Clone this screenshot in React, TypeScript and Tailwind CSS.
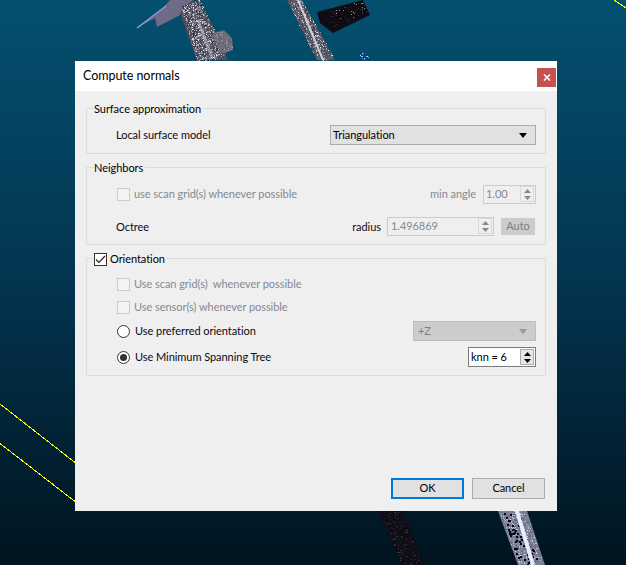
import React from "react";

function rng(seed: number) {
  let s = seed;
  return () => {
    s = (s * 16807) % 2147483647;
    return (s - 1) / 2147483646;
  };
}

type Beam = { a: [number, number]; b: [number, number]; w0: number; w1: number; palette: string[]; n: number; seed: number; size?: number };

function Speckle({ a, b, w0, w1, palette, n, seed, size = 1 }: Beam) {
  const r = rng(seed);
  const dx = b[0] - a[0];
  const dy = b[1] - a[1];
  const len = Math.hypot(dx, dy);
  const nx = -dy / len;
  const ny = dx / len;
  const rects = [];
  for (let i = 0; i < n; i++) {
    const t = r();
    const o = (r() - 0.5) * (w0 + (w1 - w0) * t);
    const x = Math.round(a[0] + dx * t + nx * o);
    const y = Math.round(a[1] + dy * t + ny * o);
    rects.push(<rect key={i} x={x} y={y} width={size} height={size} fill={palette[Math.floor(r() * palette.length)]} />);
  }
  return <g>{rects}</g>;
}

const grey = ["#e8e8f0", "#b9b9c6", "#8f8fa3", "#8f8fa3", "#7a7a8a", "#6c6c7b", "#5c5c6b", "#4d4d5a", "#3d3d4a", "#2d2d3a", "#aaaabb", "#6c6c7b"];
const dark = ["#2f2731", "#1d1a26", "#0a0f16", "#0a0f16", "#453a48", "#2a2530", "#0e0c12", "#0e0c12", "#0e0c12", "#0a0f16"];

function Scene() {
  return (
    <svg className="absolute inset-0" width={626} height={565} viewBox="0 0 626 565">
      <defs>
        <linearGradient id="bg" x1="0" y1="0" x2="0" y2="1">
          <stop offset="0" stopColor="#04506f" />
          <stop offset="0.5" stopColor="#033450" />
          <stop offset="1" stopColor="#01141f" />
        </linearGradient>
      </defs>
      <rect width={626} height={565} fill="url(#bg)" />
      <polygon points="137,28 160,11 170,0 193,0 180,15 157,27 155,18" fill="#6f6a86" />
      <line x1="137" y1="28" x2="166" y2="6" stroke="#8f9ae0" strokeWidth={1.5} />
      <polygon points="180,13 190,2 199,0 215,30 228,60 197,60" fill="#4f4d59" />
      <Speckle a={[190, 3]} b={[212, 60]} w0={20} w1={30} palette={grey} n={1700} seed={11} />
      <line x1="198" y1="20" x2="212" y2="58" stroke="#c8c8d6" strokeWidth={3} opacity={0.5} />
      <polygon points="213,33 224,30 232,38 233,50 220,54" fill="#6f6b78" />
      <Speckle a={[216, 34]} b={[230, 50]} w0={12} w1={10} palette={["#8a8694", "#55525e", "#9c98a6"]} n={70} seed={17} />
      <polygon points="287,0 302,0 335,60 317,60" fill="#55555f" />
      <Speckle a={[294, 0]} b={[326, 60]} w0={13} w1={16} palette={grey} n={700} seed={23} />
      <line x1="298" y1="0" x2="323" y2="60" stroke="#cfcfdc" strokeWidth={2} />
      <polygon points="317,12 363,0 370,15 333,33 320,23" fill="#0f0d13" />
      <Speckle a={[330, 20]} b={[366, 6]} w0={18} w1={12} palette={["#3a2f3c", "#0a0a0f", "#8a8a80", "#000000", "#0a0a0f", "#2a2530", "#0a0a0f", "#000000"]} n={150} seed={31} />
      <Speckle a={[360, 54]} b={[368, 58]} w0={6} w1={6} palette={["#8fb0ff", "#5d78c7", "#c9d6ff"]} n={14} seed={5} />
      <polygon points="378,511 403,511 425,565 402,565" fill="#0f0e16" />
      <Speckle a={[390, 511]} b={[413, 565]} w0={22} w1={20} palette={dark} n={420} seed={41} />
      <polygon points="498,511 527,511 545,565 518,565" fill="#7a7f96" />
      <Speckle a={[512, 511]} b={[531, 565]} w0={25} w1={24} palette={["#c8cce0", "#a9aec8", "#8a8ea8", "#5e6278", "#7d8198", "#6b5f70"]} n={800} seed={53} />
      <Speckle a={[508, 511]} b={[530, 565]} w0={17} w1={19} palette={["#03070d"]} n={55} seed={59} size={2} />
      <line x1="517" y1="511" x2="533" y2="565" stroke="#e8ecff" strokeWidth={4} />
      <g shapeRendering="crispEdges">
        <line x1="0" y1="404" x2="75" y2="462.5" stroke="#ffff00" strokeWidth={1} />
        <line x1="0" y1="443.5" x2="75" y2="501.5" stroke="#ffff00" strokeWidth={1} />
        <line x1="614" y1="0" x2="626" y2="8" stroke="#ffff00" strokeWidth={1} />
      </g>
    </svg>
  );
}

function Group({ children, className }: { children: React.ReactNode; className: string }) {
  return <div className={`relative mx-[11px] border border-[#dcdcdc] ${className}`}>{children}</div>;
}

function Legend({ children }: { children: React.ReactNode }) {
  return <div className="absolute left-[7px] top-[-8px] bg-[#efefef] pr-[2px] leading-[16px] text-black">{children}</div>;
}

function DisabledCheck({ label }: { label: string }) {
  return (
    <div className="flex items-center gap-[4px] text-[#838a93]">
      <div className="h-[13px] w-[13px] border border-[#cccccc] bg-[#f3f3f3]" />
      <span className="whitespace-pre">{label}</span>
    </div>
  );
}

function SpinArrows({ dim }: { dim?: boolean }) {
  const c = dim ? "#8a8a8a" : "#000000";
  return (
    <div className={`flex h-[16px] w-[14px] flex-col items-center justify-center gap-[3px] border ${dim ? "border-[#d9d9d9]" : "border-[#adadad] bg-[#e6e6e6]"}`}>
      <svg width={7} height={4} viewBox="0 0 7 4"><polygon points="3.5,0 7,4 0,4" fill={c} /></svg>
      <svg width={7} height={4} viewBox="0 0 7 4"><polygon points="0,0 7,0 3.5,4" fill={c} /></svg>
    </div>
  );
}

function Radio({ on }: { on?: boolean }) {
  return (
    <div className="flex h-[13px] w-[13px] items-center justify-center rounded-full border border-[#333333] bg-white">
      {on && <div className="h-[7px] w-[7px] rounded-full bg-[#333333]" />}
    </div>
  );
}

export default function App() {
  return (
    <div className="relative h-[565px] w-[626px] overflow-hidden" style={{ fontFamily: 'Lato, "Noto Sans", sans-serif' }}>
      <Scene />
      <div className="absolute left-[75px] top-[61px] flex h-[450px] w-[482px] flex-col bg-[#efefef] text-[11px] tracking-[-0.05px] text-[#0a0a14]">
        <div className="flex h-[30px] items-start justify-between bg-white pl-[8px]">
          <span className="mt-[7px] text-[12.5px] leading-[16px] text-black">Compute normals</span>
          <div className="mr-[1px] mt-[7px] flex h-[19px] w-[19px] items-center justify-center bg-[#c75050]">
            <svg width={8} height={7} viewBox="0 0 8 7"><path d="M1 0.5 L7 6.5 M7 0.5 L1 6.5" stroke="#ffffff" strokeWidth={1.6} /></svg>
          </div>
        </div>

        <div className="h-[17px]" />
        <Group className="h-[46px]">
          <Legend>Surface approximation</Legend>
          <div className="flex h-full items-center justify-between pl-[29px] pr-[9px] pt-[8px]">
            <span>Local surface model</span>
            <div className="flex h-[20px] w-[206px] items-center justify-between border border-[#adadad] bg-[#e1e1e1] pl-[2px] pr-[8px] text-black">
              <span>Triangulation</span>
              <svg width={8} height={5} viewBox="0 0 8 5"><polygon points="0,0 8,0 4,5" fill="#000000" /></svg>
            </div>
          </div>
        </Group>

        <div className="h-[13px]" />
        <Group className="h-[78px]">
          <Legend>Neighbors</Legend>
          <div className="flex flex-col pl-[30px] pr-[9px] pt-[16px]">
            <div className="flex h-[20px] items-center justify-between">
              <DisabledCheck label="use scan grid(s) whenever possible" />
              <div className="flex items-center gap-[7px] text-[#838a93]">
                <span>min angle</span>
                <div className="flex h-[19px] w-[53px] items-center justify-between border border-[#cccccc] pl-[2px] pr-[1px]">
                  <span>1.00</span>
                  <SpinArrows dim />
                </div>
              </div>
            </div>
            <div className="mt-[12px] flex h-[20px] items-center justify-between">
              <span className="ml-[-1px] pt-[2px]">Octree</span>
              <div className="flex items-center">
                <span className="pt-[2px] text-[#1a0a14]">radius</span>
                <div className="ml-[6px] flex h-[19px] w-[107px] items-center justify-between border border-[#cccccc] pl-[3px] pr-[1px] text-[#838a93]">
                  <span>1.496869</span>
                  <SpinArrows dim />
                </div>
                <div className="ml-[7px] mr-[1px] flex h-[17px] w-[34px] items-center justify-center bg-[#cccccc] text-[#7b8088]">Auto</div>
              </div>
            </div>
          </div>
        </Group>

        <div className="h-[13px]" />
        <Group className="h-[118px]">
          <div className="absolute left-[7px] top-[-8px] flex items-center gap-[3px] bg-[#efefef] pr-[2px] leading-[16px] text-black">
            <div className="flex h-[13px] w-[13px] items-center justify-center border border-[#333333] bg-white">
              <svg width={11} height={9} viewBox="0 0 11 9"><path d="M1 4.5 L4 7.5 L10 1" fill="none" stroke="#222222" strokeWidth={1.2} /></svg>
            </div>
            <span>Orientation</span>
          </div>
          <div className="flex flex-col pl-[30px] pr-[9px] pt-[15px]">
            <div className="flex h-[20px] items-center">
              <DisabledCheck label="Use scan grid(s)  whenever possible" />
            </div>
            <div className="mt-[3px] flex h-[20px] items-center">
              <DisabledCheck label="Use sensor(s) whenever possible" />
            </div>
            <div className="mt-[4px] flex h-[20px] items-center justify-between">
              <div className="flex items-center gap-[5px]">
                <Radio />
                <span>Use preferred orientation</span>
              </div>
              <div className="flex h-[20px] w-[123px] items-center justify-between border border-[#bdbdbd] bg-[#cccccc] pl-[4px] pr-[8px] text-[#7b8088]">
                <span>+Z</span>
                <svg width={8} height={5} viewBox="0 0 8 5"><polygon points="0,0 8,0 4,5" fill="#9a9a9a" /></svg>
              </div>
            </div>
            <div className="mt-[6px] flex h-[20px] items-center justify-between">
              <div className="flex items-center gap-[5px]">
                <Radio on />
                <span>Use Minimum Spanning Tree</span>
              </div>
              <div className="flex h-[20px] w-[68px] items-center justify-between border border-[#7a7a7a] bg-white pl-[2px] pr-[1px] text-black">
                <span>knn = 6</span>
                <SpinArrows />
              </div>
            </div>
          </div>
        </Group>

        <div className="flex-1" />
        <div className="flex justify-end gap-[8px] pb-[12px] pr-[12px]">
          <div className="flex h-[21px] w-[73px] items-center justify-center border-2 border-[#0078d7] bg-[#e1e1e1] text-black">OK</div>
          <div className="flex h-[21px] w-[73px] items-center justify-center border border-[#adadad] bg-[#e1e1e1] text-black">Cancel</div>
        </div>
      </div>
    </div>
  );
}
